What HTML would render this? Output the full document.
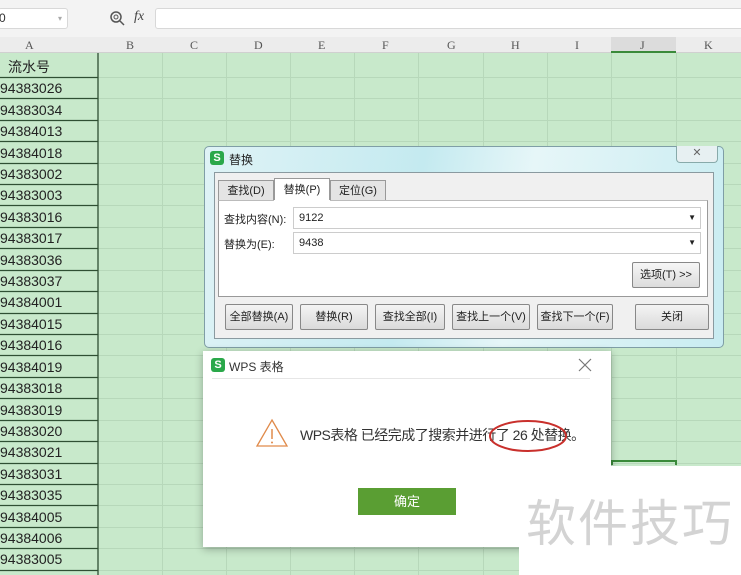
<!DOCTYPE html>
<html><head><meta charset="utf-8"><style>
*{margin:0;padding:0;box-sizing:border-box}
body{width:741px;height:575px;overflow:hidden;position:relative;background:#c8e9cb;font-family:"Liberation Sans","Noto Sans CJK SC",sans-serif;font-size:12px;color:#222}
.abs{position:absolute}
</style></head><body>
<!-- toolbar -->
<div class="abs" style="left:0;top:0;width:741px;height:37px;background:#f3f3f3"></div>
<div class="abs" style="left:-2px;top:8px;width:70px;height:21px;background:#fff;border:1px solid #d8d8d8;border-radius:3px;font-size:12px;line-height:19px;color:#333">0<span style="position:absolute;right:5px;color:#aaa;font-size:8px">▾</span></div>
<svg class="abs" style="left:109px;top:10px" width="16" height="16"><circle cx="7" cy="7" r="5" fill="none" stroke="#555" stroke-width="1.5"/><line x1="11" y1="11" x2="15" y2="15" stroke="#555" stroke-width="1.5"/><circle cx="7" cy="7" r="2" fill="none" stroke="#555"/></svg>
<div class="abs" style="left:134px;top:9px;font-family:'Liberation Serif',serif;font-style:italic;font-size:14px;color:#444">fx</div>
<div class="abs" style="left:155px;top:8px;width:600px;height:21px;background:#fff;border:1px solid #d8d8d8;border-radius:3px"></div>
<!-- column header -->
<div class="abs" style="left:0;top:37px;width:741px;height:16px;background:#ececec;border-bottom:1px solid #d0d0d0;font-family:'Liberation Serif',serif;font-size:12px;color:#555">
<span class="abs" style="left:25px;top:1px">A</span><span class="abs" style="left:126px;top:1px">B</span><span class="abs" style="left:190px;top:1px">C</span><span class="abs" style="left:254px;top:1px">D</span><span class="abs" style="left:318px;top:1px">E</span><span class="abs" style="left:382px;top:1px">F</span><span class="abs" style="left:447px;top:1px">G</span><span class="abs" style="left:511px;top:1px">H</span><span class="abs" style="left:575px;top:1px">I</span><span class="abs" style="left:640px;top:1px">J</span><span class="abs" style="left:704px;top:1px">K</span>
</div>
<div class="abs" style="left:611px;top:37px;width:65px;height:16px;background:#dcdcdc;border-bottom:2px solid #3a8a3a"></div>
<span class="abs" style="left:640px;top:38px;font-family:'Liberation Serif',serif;color:#555">J</span>
<!-- grid -->
<svg class="abs" style="left:0;top:53px" width="741" height="522">
<g stroke="#b7d8ba" stroke-width="1">
<line x1="162.5" y1="0" x2="162.5" y2="522"/><line x1="226.5" y1="0" x2="226.5" y2="522"/><line x1="290.5" y1="0" x2="290.5" y2="522"/><line x1="354.5" y1="0" x2="354.5" y2="522"/><line x1="418.5" y1="0" x2="418.5" y2="522"/><line x1="483.5" y1="0" x2="483.5" y2="522"/><line x1="547.5" y1="0" x2="547.5" y2="522"/><line x1="611.5" y1="0" x2="611.5" y2="522"/><line x1="676.5" y1="0" x2="676.5" y2="522"/>
</g>
<g stroke="#b7d8ba">
<line x1="98" y1="24.5" x2="741" y2="24.5"/><line x1="98" y1="45.5" x2="741" y2="45.5"/><line x1="98" y1="67.5" x2="741" y2="67.5"/><line x1="98" y1="88.5" x2="741" y2="88.5"/><line x1="98" y1="110.5" x2="741" y2="110.5"/><line x1="98" y1="131.5" x2="741" y2="131.5"/><line x1="98" y1="152.5" x2="741" y2="152.5"/><line x1="98" y1="174.5" x2="741" y2="174.5"/><line x1="98" y1="195.5" x2="741" y2="195.5"/><line x1="98" y1="217.5" x2="741" y2="217.5"/><line x1="98" y1="238.5" x2="741" y2="238.5"/><line x1="98" y1="260.5" x2="741" y2="260.5"/><line x1="98" y1="281.5" x2="741" y2="281.5"/><line x1="98" y1="302.5" x2="741" y2="302.5"/><line x1="98" y1="324.5" x2="741" y2="324.5"/><line x1="98" y1="345.5" x2="741" y2="345.5"/><line x1="98" y1="367.5" x2="741" y2="367.5"/><line x1="98" y1="388.5" x2="741" y2="388.5"/><line x1="98" y1="410.5" x2="741" y2="410.5"/><line x1="98" y1="431.5" x2="741" y2="431.5"/><line x1="98" y1="452.5" x2="741" y2="452.5"/><line x1="98" y1="474.5" x2="741" y2="474.5"/><line x1="98" y1="495.5" x2="741" y2="495.5"/><line x1="98" y1="517.5" x2="741" y2="517.5"/>
</g>
<g stroke="#2f4f33" stroke-width="1.3">
<line x1="0" y1="24.5" x2="98" y2="24.5"/><line x1="0" y1="45.5" x2="98" y2="45.5"/><line x1="0" y1="67.5" x2="98" y2="67.5"/><line x1="0" y1="88.5" x2="98" y2="88.5"/><line x1="0" y1="110.5" x2="98" y2="110.5"/><line x1="0" y1="131.5" x2="98" y2="131.5"/><line x1="0" y1="152.5" x2="98" y2="152.5"/><line x1="0" y1="174.5" x2="98" y2="174.5"/><line x1="0" y1="195.5" x2="98" y2="195.5"/><line x1="0" y1="217.5" x2="98" y2="217.5"/><line x1="0" y1="238.5" x2="98" y2="238.5"/><line x1="0" y1="260.5" x2="98" y2="260.5"/><line x1="0" y1="281.5" x2="98" y2="281.5"/><line x1="0" y1="302.5" x2="98" y2="302.5"/><line x1="0" y1="324.5" x2="98" y2="324.5"/><line x1="0" y1="345.5" x2="98" y2="345.5"/><line x1="0" y1="367.5" x2="98" y2="367.5"/><line x1="0" y1="388.5" x2="98" y2="388.5"/><line x1="0" y1="410.5" x2="98" y2="410.5"/><line x1="0" y1="431.5" x2="98" y2="431.5"/><line x1="0" y1="452.5" x2="98" y2="452.5"/><line x1="0" y1="474.5" x2="98" y2="474.5"/><line x1="0" y1="495.5" x2="98" y2="495.5"/><line x1="0" y1="517.5" x2="98" y2="517.5"/>
<line x1="98" y1="0" x2="98" y2="522"/>
</g>
</svg>
<div class="abs" style="left:0;top:57px;width:98px;font-size:14px;line-height:21.4px;color:#222">
<div style="padding-left:8px">流水号</div>
<div>94383026</div><div>94383034</div><div>94384013</div><div>94384018</div><div>94383002</div><div>94383003</div><div>94383016</div><div>94383017</div><div>94383036</div><div>94383037</div><div>94384001</div><div>94384015</div><div>94384016</div><div>94384019</div><div>94383018</div><div>94383019</div><div>94383020</div><div>94383021</div><div>94383031</div><div>94383035</div><div>94384005</div><div>94384006</div><div>94383005</div>
</div>
<!-- replace dialog -->
<div class="abs" style="left:204px;top:146px;width:520px;height:202px;background:linear-gradient(100deg,#dff3f6,#c4eaf0 40%,#e6f6f8 60%,#c8ecf1);border:1px solid #7f9ea6;border-radius:5px"></div>
<div class="abs" style="left:210px;top:151px;width:14px;height:14px;background:#2aa84a;border-radius:3px;color:#fff;font-size:11px;font-weight:bold;line-height:14px;text-align:center">S</div>
<div class="abs" style="left:229px;top:151px;font-size:12px">替换</div>
<div class="abs" style="left:676px;top:146px;width:42px;height:17px;border:1px solid #8aa;border-top:none;border-radius:0 0 4px 4px;background:#e7f0f2;text-align:center;color:#666;font-size:11px;line-height:15px">✕</div>
<div class="abs" style="left:214px;top:172px;width:500px;height:167px;background:#f0f0f0;border:1px solid #8a9aa0"></div>
<div class="abs" style="left:218px;top:180px;width:56px;height:21px;background:#e4e4e4;border:1px solid #999;font-size:11px;line-height:20px;text-align:center">查找(D)</div>
<div class="abs" style="left:274px;top:178px;width:56px;height:24px;background:#fff;border:1px solid #999;border-bottom:none;font-size:11px;line-height:22px;text-align:center">替换(P)</div>
<div class="abs" style="left:330px;top:180px;width:56px;height:21px;background:#e4e4e4;border:1px solid #999;font-size:11px;line-height:20px;text-align:center">定位(G)</div>
<div class="abs" style="left:218px;top:200px;width:490px;height:97px;background:#fff;border:1px solid #999;border-top:1px solid #bbb"></div>
<div class="abs" style="left:274px;top:200px;width:56px;height:2px;background:#fff"></div>
<div class="abs" style="left:224px;top:211px;font-size:11px">查找内容(N):</div>
<div class="abs" style="left:224px;top:236px;font-size:11px">替换为(E):</div>
<div class="abs" style="left:293px;top:207px;width:408px;height:22px;border:1px solid #ccc;font-size:11px;line-height:20px;padding-left:5px">9122<span style="position:absolute;right:4px;font-size:8px">▼</span></div>
<div class="abs" style="left:293px;top:232px;width:408px;height:22px;border:1px solid #ccc;font-size:11px;line-height:20px;padding-left:5px">9438<span style="position:absolute;right:4px;font-size:8px">▼</span></div>
<div class="abs" style="left:632px;top:262px;width:68px;height:26px;background:linear-gradient(#f6f6f6,#dcdcdc);border:1px solid #888;border-radius:2px;font-size:11px;line-height:24px;text-align:center">选项(T) &gt;&gt;</div>
<div class="abs" style="top:304px;left:0;font-size:11px">
<div class="abs" style="left:225px;width:68px;height:26px;background:linear-gradient(#f4f4f4,#dadada);border:1px solid #888;border-radius:2px;line-height:24px;text-align:center">全部替换(A)</div>
<div class="abs" style="left:300px;width:68px;height:26px;background:linear-gradient(#f4f4f4,#dadada);border:1px solid #888;border-radius:2px;line-height:24px;text-align:center">替换(R)</div>
<div class="abs" style="left:375px;width:70px;height:26px;background:linear-gradient(#f4f4f4,#dadada);border:1px solid #888;border-radius:2px;line-height:24px;text-align:center">查找全部(I)</div>
<div class="abs" style="left:452px;width:78px;height:26px;background:linear-gradient(#f4f4f4,#dadada);border:1px solid #888;border-radius:2px;line-height:24px;text-align:center">查找上一个(V)</div>
<div class="abs" style="left:537px;width:76px;height:26px;background:linear-gradient(#f4f4f4,#dadada);border:1px solid #888;border-radius:2px;line-height:24px;text-align:center">查找下一个(F)</div>
<div class="abs" style="left:635px;width:74px;height:26px;background:linear-gradient(#f4f4f4,#dadada);border:1px solid #888;border-radius:2px;line-height:24px;text-align:center">关闭</div>
</div>
<div class="abs" style="left:611px;top:460px;width:66px;height:5px;border:2px solid #3a8a3a;border-bottom:none"></div>
<!-- message dialog -->
<div class="abs" style="left:203px;top:351px;width:408px;height:196px;background:#fff;box-shadow:0 2px 8px rgba(0,0,0,.3)"></div>
<div class="abs" style="left:211px;top:358px;width:14px;height:14px;background:#2aa84a;border-radius:3px;color:#fff;font-size:11px;font-weight:bold;line-height:14px;text-align:center">S</div>
<div class="abs" style="left:229px;top:358px;font-size:12px;color:#333">WPS 表格</div>
<svg class="abs" style="left:578px;top:358px" width="14" height="14"><path d="M1 1L13 13M13 1L1 13" stroke="#777" stroke-width="1.2"/></svg>
<div class="abs" style="left:212px;top:378px;width:378px;height:1px;background:#e6e6e6"></div>
<svg class="abs" style="left:255px;top:418px" width="34" height="30"><path d="M17 2L32 28H2Z" fill="none" stroke="#e08a4a" stroke-width="1.3"/><line x1="17" y1="11" x2="17" y2="21" stroke="#e08a4a" stroke-width="1.5"/><circle cx="17" cy="24.5" r="1" fill="#e08a4a"/></svg>
<div class="abs" style="left:300px;top:425px;font-size:14px;color:#333;white-space:nowrap;letter-spacing:-0.5px">WPS表格 已经完成了搜索并进行了 26 处替换。</div>
<svg class="abs" style="left:486px;top:416px" width="84" height="40"><ellipse cx="42" cy="20" rx="38" ry="15" fill="none" stroke="#c9302c" stroke-width="2"/></svg>
<div class="abs" style="left:358px;top:488px;width:98px;height:27px;background:#5a9e33;color:#fff;font-size:13px;line-height:27px;text-align:center">确定</div>
<!-- watermark area on top -->
<div class="abs" style="left:519px;top:466px;width:222px;height:109px;background:#fff"></div>
<div class="abs" style="left:526px;top:485px;font-size:50px;color:#d3d3d3;letter-spacing:2px;font-family:'Noto Sans CJK SC',sans-serif;line-height:70px;white-space:nowrap">软件技巧</div>
</body></html>
